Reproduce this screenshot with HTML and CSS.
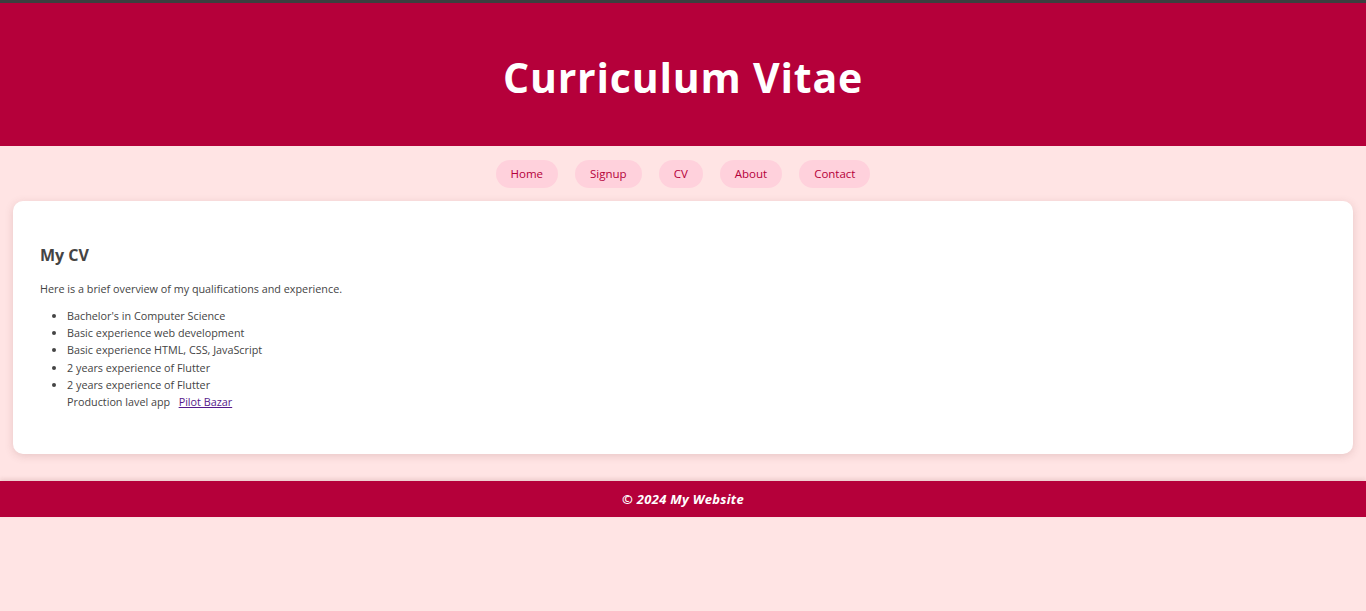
FILE: index.html
```html
<!DOCTYPE html>
<html lang="en">
<head>
<meta charset="utf-8">
<title>Curriculum Vitae</title>
<link rel="stylesheet" href="styles.css">
</head>
<body>
<div class="topbar"></div>
<header class="site-header">
  <h1>Curriculum Vitae</h1>
</header>
<nav class="site-nav">
  <a href="#">Home</a>
  <a href="#">Signup</a>
  <a href="#">CV</a>
  <a href="#">About</a>
  <a href="#">Contact</a>
</nav>
<main class="card">
  <h2>My CV</h2>
  <p>Here is a brief overview of my qualifications and experience.</p>
  <ul>
    <li>Bachelor's in Computer Science</li>
    <li>Basic experience web development</li>
    <li>Basic experience HTML, CSS, JavaScript</li>
    <li>2 years experience of Flutter</li>
    <li>2 years experience of Flutter<br>Production lavel app &nbsp; <a href="#">Pilot Bazar</a></li>
  </ul>
</main>
<footer class="site-footer">
  <p>&copy; 2024 My Website</p>
</footer>
</body>
</html>
```
FILE: styles.css
```css
* { box-sizing: border-box; }
html, body { margin: 0; padding: 0; }
body {
  background: #ffe4e4;
  font-family: "Comic Sans MS", "Open Sans", sans-serif;
  color: #444;
  height: 611px;
  overflow: hidden;
}
.topbar { height: 3px; background: #3b3f3f; }
.site-header {
  background: #b5003a;
  height: 143px;
  display: flex;
  align-items: center;
  justify-content: center;
  padding-top: 4px;
}
.site-header h1 {
  margin: 0;
  color: #fff;
  font-size: 41px;
  font-weight: 700;
  letter-spacing: 0.8px;
}
.site-nav {
  height: 55px;
  display: flex;
  justify-content: center;
  align-items: center;
  gap: 17px;
}
.site-nav a {
  display: block;
  height: 28px;
  line-height: 28px;
  padding: 0 15px;
  border-radius: 14px;
  background: #ffd1dc;
  color: #b5003a;
  text-decoration: none;
  font-size: 11.5px;
}
.card {
  display: block;
  margin: 0 13px;
  background: #fff;
  border-radius: 10px;
  box-shadow: 0 2px 8px rgba(120, 60, 60, 0.18);
  padding: 40px 27px 35px;
  height: 253px;
}
.card h2 {
  margin: 0 0 11px;
  font-size: 16px;
  font-weight: 700;
  color: #444;
  line-height: 28px;
}
.card p {
  margin: 0 0 10px;
  font-size: 10.8px;
  line-height: 17px;
}
.card ul {
  margin: 0;
  padding-left: 27px;
  font-size: 10.8px;
  line-height: 17.2px;
}
.card a { color: #551a8b; }
.site-footer {
  margin-top: 27px;
  background: #b5003a;
  height: 36px;
  box-shadow: 0 -2px 4px rgba(120, 60, 60, 0.15);
  display: flex;
  align-items: center;
  justify-content: center;
}
.site-footer p {
  margin: 0;
  color: #fff;
  font-style: italic;
  font-weight: 700;
  font-size: 13px;
  letter-spacing: 0.3px;
}
```
